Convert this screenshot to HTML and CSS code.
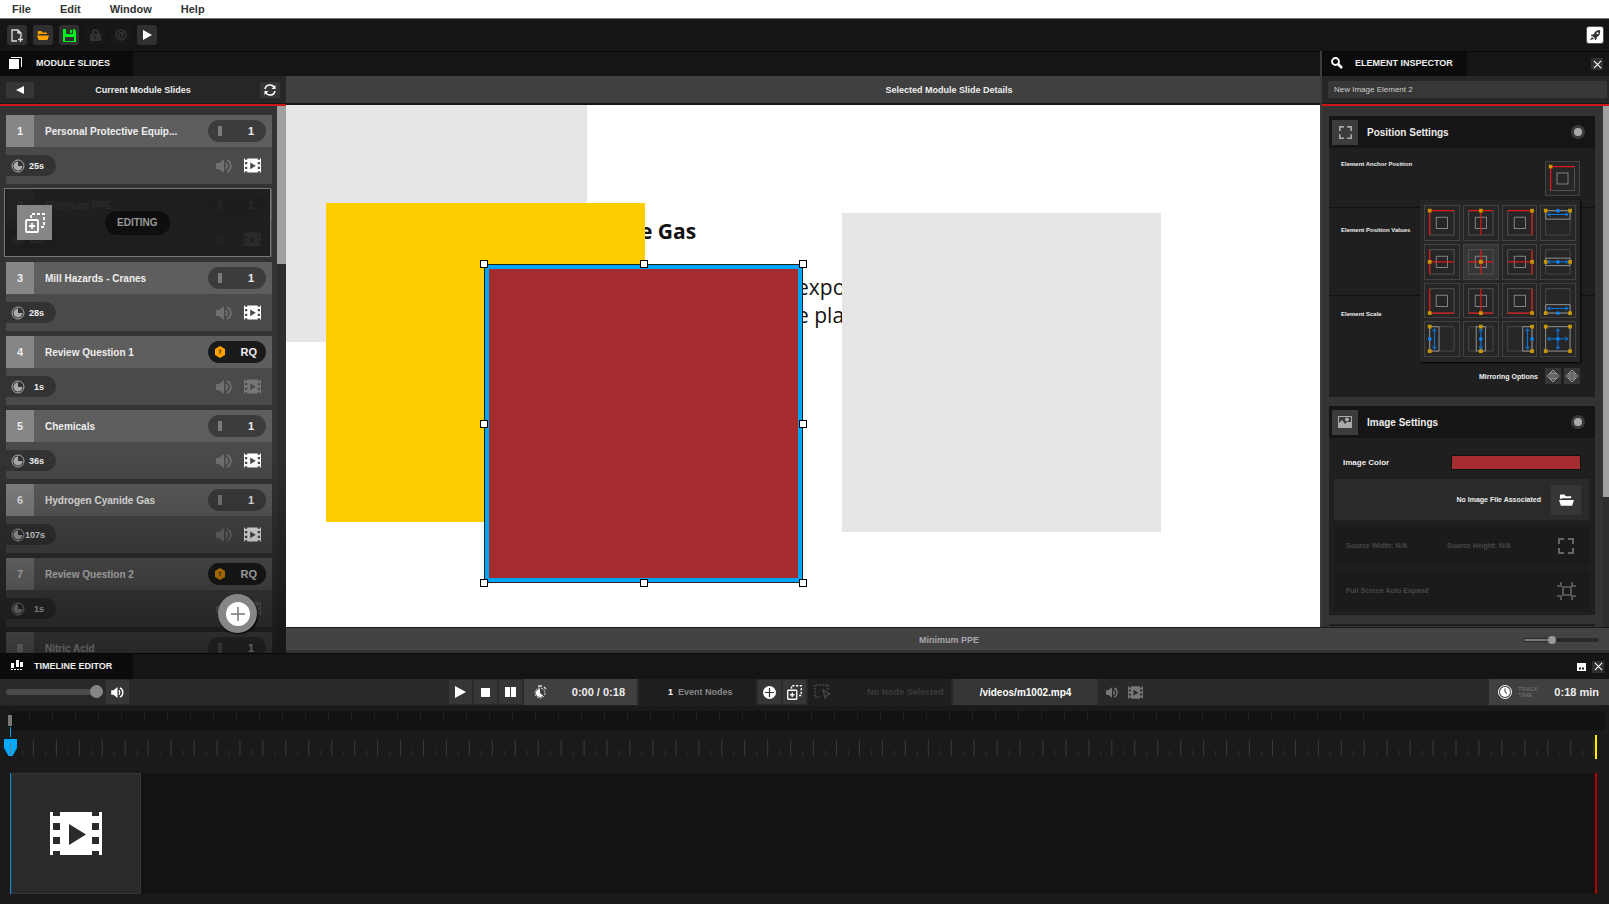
FILE: index.html
```html
<!DOCTYPE html>
<html lang="en">
<head>
    <meta charset="utf-8">
    <title>Module Editor</title>
    <meta name="viewport" content="width=device-width, initial-scale=1.0">
    <link rel="stylesheet" href="styles.css">
</head>
<body>
    <!-- Shared icons -->
    <svg class="sprite" aria-hidden="true">
        <symbol id="film" viewBox="0 0 52 43">
            <path fill="currentColor" fill-rule="evenodd" d="M0 0h3v4h7V0h32v4h7V0h3v43h-3v-4h-7v4H10v-4H3v4H0zM3 11v7h7v-7zM3 25v7h7v-7zM42 11v7h7v-7zM42 25v7h7v-7zM19 12v21l17-10.500z"/>
        </symbol>
        <symbol id="speaker" viewBox="0 1 16 14">
            <path fill="currentColor" d="M0 5h3l5-4v14l-5-4H0z"/>
            <path fill="none" stroke="currentColor" stroke-width="1.800" d="M10 5q2 3 0 6M11 2c5 2 5 10 0 12"/>
        </symbol>
        <symbol id="clock" viewBox="0 0 14 14">
            <circle cx="7" cy="7" r="6" fill="none" stroke="currentColor"/>
            <path fill="currentColor" d="M7 2.500A4.500 4.500 0 1 0 11.500 7H7z"/>
        </symbol>
        <symbol id="bar" viewBox="0 0 10 12">
            <path fill="#7a7a7a" d="M3 1h4v10H3z"/>
        </symbol>
        <symbol id="hex" viewBox="0 0 10 12">
            <path fill="#ffa200" d="M5 0l5 3v6l-5 3-5-3V3z"/>
            <path fill="none" stroke="#4a3000" d="M4 5q0-1 1-1t1 1l-1 1v2"/>
        </symbol>
        <symbol id="duplicate" viewBox="0 0 20 20">
            <rect x="1" y="7" width="12" height="12" rx="1" fill="none" stroke="currentColor" stroke-width="1.800"/>
            <path fill="none" stroke="currentColor" stroke-width="1.800" d="M7 10v6M4 13h6"/>
            <path fill="none" stroke="currentColor" stroke-width="1.800" stroke-dasharray="3 2" d="M6 5V1h13v13h-4"/>
        </symbol>
        <symbol id="expand" viewBox="0 0 16 16">
            <path fill="none" stroke="currentColor" stroke-width="2" d="M1 6V1h5M10 1h5v5M15 10v5h-5M6 15H1v-5"/>
        </symbol>
        <symbol id="folder" viewBox="0 0 16 12">
            <path fill="currentColor" d="M1 5V1q0-1 1-1h4l1 2h6v2H4zM0 6h16l-2 6H2z"/>
        </symbol>
        <symbol id="cross" viewBox="0 0 10 10">
            <path fill="none" stroke="currentColor" stroke-width="1.200" d="M1 1l8 8M9 1l-8 8"/>
        </symbol>
        <symbol id="frame" viewBox="0 0 36 36">
            <rect x="5" y="5" width="26" height="26" fill="none" stroke="#555"/>
            <rect x="12" y="12" width="12" height="12" fill="none" stroke="#888"/>
        </symbol>
        <symbol id="anchor-tl" viewBox="0 0 36 36">
            <use href="#frame"/>
            <path fill="none" stroke="#e01818" stroke-width="1.300" d="M5 31V5h26"/>
            <path fill="#c89600" d="M3 3h4v4H3z"/>
        </symbol>
    </svg>

    <nav class="menu">
        <button>File</button>
        <button>Edit</button>
        <button>Window</button>
        <button>Help</button>
    </nav>

    <header class="toolbar">
        <button class="tool" aria-label="New">
            <svg width="12" height="13" viewBox="0 0 12 13"><path fill="none" stroke="#ddd" stroke-width="1.300" d="M6 12H1V1h6l3 3v4M7 1v3h3M7 10.500h5M9.500 8v5"/></svg>
        </button>
        <button class="tool open" aria-label="Open"><svg width="12" height="9"><use href="#folder"/></svg></button>
        <button class="tool" aria-label="Save">
            <svg width="13" height="13" viewBox="0 0 13 13"><path fill="#00f51d" fill-rule="evenodd" d="M0 0h11l2 2v11H0zM3 0v5h7V0zM2 8v4h9V8z"/><path fill="#00f51d" d="M7 1h2v3H7z"/></svg>
        </button>
        <button class="tool off" aria-label="Lock" disabled>
            <svg width="11" height="12" viewBox="0 0 11 12"><path fill="#333" d="M0 5h11v7H0z"/><path fill="none" stroke="#333" stroke-width="2" d="M3 5V3q0-2 2.500-2T8 3v2"/><path fill="#181818" d="M5 7h1v3H5z"/></svg>
        </button>
        <button class="tool off" aria-label="Reload" disabled>
            <svg width="12" height="12" viewBox="0 0 12 12"><circle cx="6" cy="6" r="5" fill="none" stroke="#333" stroke-width="1.500"/><path fill="none" stroke="#333" stroke-width="1.500" d="M8 4.500A2.500 2.500 0 1 0 8 8M8 3v3H6"/></svg>
        </button>
        <button class="tool" aria-label="Preview">
            <svg width="9" height="10" viewBox="0 0 9 10"><path fill="#fff" d="M0 0l9 5-9 5z"/></svg>
        </button>
        <button class="tool launch" aria-label="Publish">
            <svg width="11" height="11" viewBox="0 0 11 11"><path fill="#333" d="M10 0Q5 0 4 4L1 5v1l2 .500L4.500 8 5 10h1l1-3q4-2 3-7zM0 10l2-3 2 2z"/><circle cx="7.500" cy="3.300" r="1" fill="#fff"/></svg>
        </button>
    </header>

    <main class="workspace">
        <aside class="slides">
            <div class="tabs">
                <h2 class="tab">
                    <svg width="13" height="12" viewBox="0 0 13 12"><path fill="#fff" d="M0 2h10v10H0z"/><path fill="none" stroke="#fff" d="M2 .500h10.500V10"/></svg>
                    MODULE SLIDES
                </h2>
            </div>
            <div class="panel-head">
                <button class="small-btn" aria-label="Back"><svg width="8" height="8" viewBox="0 0 8 8"><path fill="#fff" d="M8 0v8L0 4z"/></svg></button>
                <span>Current Module Slides</span>
                <button class="small-btn refresh" aria-label="Refresh">
                    <svg width="12" height="12" viewBox="0 0 12 12"><path fill="none" stroke="#fff" stroke-width="1.500" d="M1 5a5 5 0 0 1 9.500-1M11 7a5 5 0 0 1-9.500 1"/><path fill="#fff" d="M11.500 1v4h-4zM.500 11V7h4z"/></svg>
                </button>
            </div>
            <div class="slide-scroll">
                <div class="slide-list">
                    <article class="card">
                        <div class="card-head"><b class="num">1</b><span class="name">Personal Protective Equip...</span><span class="count"><svg width="10" height="12"><use href="#bar"/></svg>1</span></div>
                        <div class="card-body"><span class="time"><svg width="14" height="14"><use href="#clock"/></svg>25s</span><svg class="snd" width="16" height="14"><use href="#speaker"/></svg><svg class="vid on" width="17" height="15"><use href="#film"/></svg></div>
                    </article>
                    <article class="card editing">
                        <div class="card-head"><b class="num">2</b><span class="name">Minimum PPE</span><span class="count"><svg width="10" height="12"><use href="#bar"/></svg>1</span></div>
                        <div class="card-body"><span class="time"><svg width="14" height="14"><use href="#clock"/></svg>18s</span><svg class="snd" width="16" height="14"><use href="#speaker"/></svg><svg class="vid on" width="17" height="15"><use href="#film"/></svg></div>
                        <div class="edit-cover">
                            <button class="dup" aria-label="Duplicate slide"><svg width="20" height="20"><use href="#duplicate"/></svg></button>
                            <span class="edit-label">EDITING</span>
                        </div>
                    </article>
                    <article class="card">
                        <div class="card-head"><b class="num">3</b><span class="name">Mill Hazards - Cranes</span><span class="count"><svg width="10" height="12"><use href="#bar"/></svg>1</span></div>
                        <div class="card-body"><span class="time"><svg width="14" height="14"><use href="#clock"/></svg>28s</span><svg class="snd" width="16" height="14"><use href="#speaker"/></svg><svg class="vid on" width="17" height="15"><use href="#film"/></svg></div>
                    </article>
                    <article class="card">
                        <div class="card-head"><b class="num">4</b><span class="name">Review Question 1</span><span class="count rq"><svg width="10" height="12"><use href="#hex"/></svg>RQ</span></div>
                        <div class="card-body"><span class="time"><svg width="14" height="14"><use href="#clock"/></svg>1s</span><svg class="snd" width="16" height="14"><use href="#speaker"/></svg><svg class="vid" width="17" height="15"><use href="#film"/></svg></div>
                    </article>
                    <article class="card">
                        <div class="card-head"><b class="num">5</b><span class="name">Chemicals</span><span class="count"><svg width="10" height="12"><use href="#bar"/></svg>1</span></div>
                        <div class="card-body"><span class="time"><svg width="14" height="14"><use href="#clock"/></svg>36s</span><svg class="snd" width="16" height="14"><use href="#speaker"/></svg><svg class="vid on" width="17" height="15"><use href="#film"/></svg></div>
                    </article>
                    <article class="card">
                        <div class="card-head"><b class="num">6</b><span class="name">Hydrogen Cyanide Gas</span><span class="count"><svg width="10" height="12"><use href="#bar"/></svg>1</span></div>
                        <div class="card-body"><span class="time"><svg width="14" height="14"><use href="#clock"/></svg>107s</span><svg class="snd" width="16" height="14"><use href="#speaker"/></svg><svg class="vid on" width="17" height="15"><use href="#film"/></svg></div>
                    </article>
                    <article class="card">
                        <div class="card-head"><b class="num">7</b><span class="name">Review Question 2</span><span class="count rq"><svg width="10" height="12"><use href="#hex"/></svg>RQ</span></div>
                        <div class="card-body"><span class="time"><svg width="14" height="14"><use href="#clock"/></svg>1s</span><svg class="snd" width="16" height="14"><use href="#speaker"/></svg><svg class="vid" width="17" height="15"><use href="#film"/></svg></div>
                    </article>
                    <article class="card">
                        <div class="card-head"><b class="num">8</b><span class="name">Nitric Acid</span><span class="count"><svg width="10" height="12"><use href="#bar"/></svg>1</span></div>
                    </article>
                </div>
                <div class="scrollbar"><div class="thumb"></div></div>
                <button class="add-slide" aria-label="Add slide"><svg width="24" height="24" viewBox="0 0 24 24"><circle cx="12" cy="12" r="12" fill="#fff"/><path stroke="#777" stroke-width="1.500" d="M12 5v14M5 12h14"/></svg></button>
            </div>
        </aside>

        <section class="stage">
            <div class="tabs"></div>
            <div class="stage-head">Selected Module Slide Details</div>
            <div class="canvas">
                <div class="shape grey-a"></div>
                <p class="slide-title">e Gas</p>
                <p class="slide-text">expo<br>e pla</p>
                <div class="shape grey-b"></div>
                <div class="shape yellow"></div>
                <div class="shape red">
                    <i class="handle nw"></i><i class="handle n"></i><i class="handle ne"></i>
                    <i class="handle w"></i><i class="handle e"></i>
                    <i class="handle sw"></i><i class="handle s"></i><i class="handle se"></i>
                </div>
            </div>
        </section>

        <aside class="inspector">
            <div class="tabs">
                <h2 class="tab">
                    <svg width="12" height="12" viewBox="0 0 12 12"><circle cx="4.500" cy="4.500" r="3.500" fill="none" stroke="#fff" stroke-width="1.800"/><path stroke="#fff" stroke-width="2.500" d="M7 7l4 4"/></svg>
                    ELEMENT INSPECTOR
                </h2>
                <button class="close" aria-label="Close inspector"><svg width="9" height="9"><use href="#cross"/></svg></button>
            </div>
            <div class="panel-head">
                <input class="element-name" type="text" value="New Image Element 2" aria-label="Element name">
            </div>
            <div class="inspector-scroll">
                <div class="groups">
                    <section class="group">
                        <h3 class="group-head"><span class="group-icon"><svg width="13" height="13"><use href="#expand"/></svg></span>Position Settings<i class="dot"></i></h3>
                        <div class="row anchor-row">
                            <span>Element Anchor Position</span>
                            <button class="anchor current" aria-label="Anchor top left"><svg><use href="#anchor-tl"/></svg></button>
                            <div class="anchor-menu">
                                <button class="anchor" aria-label="Top left"><svg viewBox="0 0 36 36"><use href="#anchor-tl"/></svg></button>
                                <button class="anchor" aria-label="Top center"><svg viewBox="0 0 36 36"><use href="#frame"/><path class="r" d="M5 5h26M18 5v26"/><path class="y" d="M16 3h4v4h-4z"/></svg></button>
                                <button class="anchor" aria-label="Top right"><svg viewBox="0 0 36 36"><use href="#frame"/><path class="r" d="M5 5h26v26"/><path class="y" d="M29 3h4v4h-4z"/></svg></button>
                                <button class="anchor" aria-label="Stretch top"><svg viewBox="0 0 36 36"><path class="o" d="M5 5h26v26H5z"/><path class="g" d="M5 5h26v9H5z"/><path class="b" d="M8 9h20M10 7L7 9l3 2M26 7l3 2-3 2"/><path class="y" d="M3 3h4v4H3zM29 3h4v4h-4z"/><circle class="d" cx="18" cy="5" r="2"/></svg></button>

                                <button class="anchor" aria-label="Middle left"><svg viewBox="0 0 36 36"><use href="#frame"/><path class="r" d="M5 5v26M5 18h26"/><path class="y" d="M3 16h4v4H3z"/></svg></button>
                                <button class="anchor hover" aria-label="Middle center"><svg viewBox="0 0 36 36"><use href="#frame"/><path class="r" d="M5 18h26M18 5v26"/><path class="y" d="M16 16h4v4h-4z"/></svg></button>
                                <button class="anchor" aria-label="Middle right"><svg viewBox="0 0 36 36"><use href="#frame"/><path class="r" d="M31 5v26M5 18h26"/><path class="y" d="M29 16h4v4h-4z"/></svg></button>
                                <button class="anchor" aria-label="Stretch middle"><svg viewBox="0 0 36 36"><path class="o" d="M5 5h26v26H5z"/><path class="g" d="M5 14h26v8H5z"/><path class="b" d="M8 18h20M10 16l-3 2 3 2M26 16l3 2-3 2"/><path class="y" d="M3 16h4v4H3zM29 16h4v4h-4z"/><circle class="d" cx="18" cy="18" r="2"/></svg></button>

                                <button class="anchor" aria-label="Bottom left"><svg viewBox="0 0 36 36"><use href="#frame"/><path class="r" d="M5 5v26h26"/><path class="y" d="M3 29h4v4H3z"/></svg></button>
                                <button class="anchor" aria-label="Bottom center"><svg viewBox="0 0 36 36"><use href="#frame"/><path class="r" d="M5 31h26M18 5v26"/><path class="y" d="M16 29h4v4h-4z"/></svg></button>
                                <button class="anchor" aria-label="Bottom right"><svg viewBox="0 0 36 36"><use href="#frame"/><path class="r" d="M31 5v26H5"/><path class="y" d="M29 29h4v4h-4z"/></svg></button>
                                <button class="anchor" aria-label="Stretch bottom"><svg viewBox="0 0 36 36"><path class="o" d="M5 5h26v26H5z"/><path class="g" d="M5 22h26v9H5z"/><path class="b" d="M8 26h20M10 24l-3 2 3 2M26 24l3 2-3 2"/><path class="y" d="M3 29h4v4H3zM29 29h4v4h-4z"/><circle class="d" cx="18" cy="31" r="2"/></svg></button>

                                <button class="anchor" aria-label="Stretch left"><svg viewBox="0 0 36 36"><path class="o" d="M5 5h26v26H5z"/><path class="g" d="M5 5h10v26H5z"/><path class="b" d="M10 8v20M8 10l2-3 2 3M8 26l2 3 2-3"/><path class="y" d="M3 3h4v4H3zM3 29h4v4H3z"/><circle class="d" cx="5" cy="18" r="2"/></svg></button>
                                <button class="anchor" aria-label="Stretch center"><svg viewBox="0 0 36 36"><path class="o" d="M5 5h26v26H5z"/><path class="g" d="M13 5h10v26H13z"/><path class="b" d="M18 8v20M16 10l2-3 2 3M16 26l2 3 2-3"/><path class="y" d="M16 3h4v4h-4zM16 29h4v4h-4z"/><circle class="d" cx="18" cy="18" r="2"/></svg></button>
                                <button class="anchor" aria-label="Stretch right"><svg viewBox="0 0 36 36"><path class="o" d="M5 5h26v26H5z"/><path class="g" d="M21 5h10v26H21z"/><path class="b" d="M26 8v20M24 10l2-3 2 3M24 26l2 3 2-3"/><path class="y" d="M29 3h4v4h-4zM29 29h4v4h-4z"/><circle class="d" cx="31" cy="18" r="2"/></svg></button>
                                <button class="anchor" aria-label="Stretch all"><svg viewBox="0 0 36 36"><path class="g" d="M5 5h26v26H5z"/><path class="b" d="M8 18h20M18 8v20M10 16l-3 2 3 2M26 16l3 2-3 2M16 10l2-3 2 3M16 26l2 3 2-3"/><path class="y" d="M3 3h4v4H3zM29 3h4v4h-4zM3 29h4v4H3zM29 29h4v4h-4z"/><circle class="d" cx="18" cy="18" r="2"/></svg></button>
                            </div>
                        </div>
                        <div class="row values-row"><span>Element Position Values</span></div>
                        <div class="row scale-row">
                            <span>Element Scale</span>
                            <div class="mirror">
                                <span>Mirroring Options</span>
                                <button aria-label="Mirror horizontally"><svg width="12" height="12" viewBox="0 0 12 12"><path d="M6 0l3 3H3zM6 12l3-3H3zM0 6l3-3v6zM12 6L9 3v6zM5 3v6M7 3v6"/></svg></button>
                                <button aria-label="Mirror vertically"><svg width="12" height="12" viewBox="0 0 12 12"><path d="M6 0l3 3H3zM6 12l3-3H3zM0 6l3-3v6zM12 6L9 3v6zM3 5h6M3 7h6"/></svg></button>
                            </div>
                        </div>
                    </section>

                    <section class="group">
                        <h3 class="group-head"><span class="group-icon"><svg width="14" height="12" viewBox="0 0 14 12"><path fill="#aaa" fill-rule="evenodd" d="M0 0h14v12H0zM1 1v6l3-3 3 4 2-2h4V1z"/><circle cx="9" cy="3.500" r="2" fill="#aaa"/></svg></span>Image Settings<i class="dot"></i></h3>
                        <div class="color-row">
                            <label for="image-color">Image Color</label>
                            <input type="color" id="image-color" value="#a52d30">
                        </div>
                        <div class="box file-box">
                            <span>No Image File Associated</span>
                            <button aria-label="Browse image"><svg width="15" height="12"><use href="#folder"/></svg></button>
                        </div>
                        <div class="box dim">
                            <span class="half">Source Width: N/A</span>
                            <span class="half">Source Height: N/A</span>
                            <button aria-label="Use source size" disabled><svg width="16" height="16"><use href="#expand"/></svg></button>
                        </div>
                        <div class="box dim">
                            <span>Full Screen Auto Expand</span>
                            <button aria-label="Full screen" disabled><svg width="19" height="18" viewBox="0 0 19 18"><path fill="none" stroke="currentColor" stroke-width="1.600" d="M6 5h8v8H6zM0 4h4V0M15 0v4h4M19 14h-4v4M4 18v-4H0"/></svg></button>
                        </div>
                    </section>
                    <section class="group"></section>
                </div>
                <div class="scrollbar"><div class="thumb"></div></div>
            </div>
        </aside>

        <footer class="stage-foot">
            <span>Minimum PPE</span>
            <input class="zoom" type="range" min="0" max="100" value="37" aria-label="Zoom">
        </footer>
    </main>

    <section class="timeline">
        <div class="tabs">
            <h2 class="tab">
                <svg width="12" height="11" viewBox="0 0 12 11"><path fill="#fff" d="M0 3h3v5H0zM5 0h3v7H5zM9 2h3v5H9z"/><path stroke="#fff" stroke-dasharray="2 1" d="M0 9.500h12"/></svg>
                TIMELINE EDITOR
            </h2>
            <button class="dock" aria-label="Dock timeline"><svg width="9" height="8" viewBox="0 0 9 8"><path fill="#fff" d="M0 0h9v8H0z"/><path stroke="#222" d="M2 5.500h2M5 5.500h2M3 4v3M6 4v3"/></svg></button>
            <button class="close" aria-label="Close timeline"><svg width="9" height="9"><use href="#cross"/></svg></button>
        </div>

        <div class="controls">
            <div class="volume">
                <input type="range" min="0" max="100" value="100" aria-label="Volume">
                <button class="ctl" aria-label="Mute"><svg width="13" height="11"><use href="#speaker"/></svg></button>
            </div>
            <button class="ctl" aria-label="Play"><svg width="11" height="12" viewBox="0 0 11 12"><path fill="#fff" d="M0 0l11 6-11 6z"/></svg></button>
            <button class="ctl" aria-label="Stop"><svg width="9" height="9"><path fill="#fff" d="M0 0h9v9H0z"/></svg></button>
            <button class="ctl" aria-label="Pause"><svg width="11" height="10"><path fill="#fff" d="M0 0h5v10H0zM6 0h5v10H6z"/></svg></button>
            <div class="clock-box">
                <svg width="13" height="14" viewBox="0 0 13 14"><circle cx="6" cy="8" r="5" fill="none" stroke="#ddd" stroke-dasharray="2 1"/><path fill="#fff" d="M6 4a4 4 0 1 0 3 6.500L6 8z"/><path stroke="#ddd" stroke-width="1.500" d="M4 1h4M10 2l2 2"/></svg>
                <span>0:00 / 0:18</span>
            </div>
            <div class="nodes"><b>1</b> Event Nodes</div>
            <button class="ctl" aria-label="Add node"><svg width="13" height="13" viewBox="0 0 13 13"><circle cx="6.500" cy="6.500" r="6.500" fill="#fff"/><path stroke="#333" stroke-width="1.200" d="M6.500 2v9M2 6.500h9"/></svg></button>
            <button class="ctl" aria-label="Duplicate node"><svg width="15" height="15"><use href="#duplicate"/></svg></button>
            <div class="no-node">
                <svg width="17" height="16" viewBox="0 0 17 16"><path fill="none" stroke="#444" stroke-width="1.500" stroke-dasharray="2 1" d="M14 6V1H1v12h6"/><path fill="none" stroke="#444" stroke-width="1.500" d="M9 6l7 4-3 1-2 3z"/></svg>
                <span>No Node Selected</span>
            </div>
            <div class="video-name">/videos/m1002.mp4</div>
            <button class="ctl faint" aria-label="Clip sound"><svg width="12" height="11"><use href="#speaker"/></svg></button>
            <button class="ctl faint" aria-label="Clip video"><svg width="15" height="13"><use href="#film"/></svg></button>
            <div class="track-time">
                <svg width="14" height="14" viewBox="0 0 14 14"><circle cx="7" cy="7" r="6.500" fill="none" stroke="#fff"/><circle cx="7" cy="7" r="5" fill="#fff"/><path fill="none" stroke="#333" d="M7 3.500V7l2 1.500"/></svg>
                <small>TRACK<br>TIME</small>
                <span>0:18 min</span>
            </div>
        </div>

        <div class="overview">
            <svg class="ticks" width="100%" height="9"><defs><pattern id="small-ticks" width="23" height="9" patternUnits="userSpaceOnUse"><path fill="#1f1f1f" d="M19 0h1v9h-1z"/><path fill="#181818" d="M8 2h1v2H8z"/></pattern></defs><rect width="1376" height="9" fill="url(#small-ticks)"/></svg>
            <i class="marker"></i>
        </div>
        <div class="ruler">
            <svg width="100%" height="18"><defs><pattern id="big-ticks" x="1" width="22.945" height="18" patternUnits="userSpaceOnUse"><path fill="#3a3a3a" d="M21.900 1h1v16h-1z"/><path fill="#2b2b2b" d="M11 11h1v6h-1z"/></pattern></defs><rect width="100%" height="18" fill="url(#big-ticks)"/></svg>
            <svg class="playhead" width="13" height="29" viewBox="0 0 13 29"><path fill="#0af" d="M6 0h1v10H6zM0 12h13v9l-4.500 8h-4L0 21z"/><path fill="#777" d="M6 16h1v12H6z"/></svg>
            <i class="end"></i>
        </div>
        <div class="track">
            <div class="clip"><svg width="52" height="43"><use href="#film"/></svg></div>
        </div>
    </section>
</body>
</html>
```

FILE: styles.css
```css
* {
    box-sizing: border-box;
}

body {
    margin: 0;
    height: 100vh;
    display: flex;
    flex-direction: column;
    overflow: hidden;
    background-color: #1a1a1a;
    color: #eee;
    font-family: 'Liberation Sans', Arial, sans-serif;
    font-size: 10px;
    font-weight: bold;
}

button {
    display: flex;
    align-items: center;
    justify-content: center;
    flex: none;
    padding: 0;
    border: none;
    background-color: #363636;
    color: #fff;
    font: inherit;
}

h2, h3, p {
    margin: 0;
    font-size: inherit;
}

.sprite {
    position: absolute;
    width: 0;
    height: 0;
}

/* Menu and toolbar */
.menu {
    display: flex;
    gap: 29px;
    height: 19px;
    padding-left: 12px;
    background-color: #fff;
    border-bottom: 1px solid #777;
}

.menu button {
    background: none;
    color: #333;
    font-size: 11px;
}

.toolbar {
    display: flex;
    align-items: center;
    gap: 6px;
    height: 32px;
    padding: 0 5px 0 7px;
    background-color: #151515;
}

.tool {
    width: 20px;
    height: 20px;
    background-color: #303030;
    border-radius: 3px;
}

.tool.open {
    color: #ffa200;
}

.tool.off {
    background-color: #181818;
}

.tool.launch {
    width: 18px;
    height: 18px;
    margin-left: auto;
    background-color: #fff;
    border: 1px solid #555;
}

/* Tabs */
.tabs {
    display: flex;
    align-items: center;
    height: 25px;
    background-color: #151515;
    border-top: 1px solid #080808;
}

.tab {
    display: flex;
    align-items: center;
    gap: 14px;
    width: 133px;
    height: 100%;
    padding: 0 0 2px 9px;
    background-color: #0b0b0b;
    font-size: 9px;
}

.close {
    width: 12px;
    height: 12px;
    margin-left: auto;
    background-color: #303030;
}

.panel-head {
    display: flex;
    align-items: center;
    height: 28px;
    padding: 0 6px;
    background-color: #262626;
    font-size: 9px;
    border-bottom: 1px solid #1a1a1a;
}

.panel-head span {
    flex: 1;
    padding-right: 8px;
    text-align: center;
}

.small-btn {
    width: 28px;
    height: 16px;
}

.small-btn.refresh {
    width: 20px;
}

.scrollbar {
    width: 9px;
    background-color: #2e2e2e;
}

.thumb {
    background-color: #a0a0a0;
}

/* Workspace */
.workspace {
    flex: 1;
    min-height: 0;
    display: grid;
    grid-template-columns: 286px 1fr 289px;
    grid-template-rows: minmax(0, 1fr) 26px;
}

.slides {
    grid-row: 1 / 3;
    display: flex;
    flex-direction: column;
    min-height: 0;
}

.slide-scroll {
    position: relative;
    flex: 1;
    display: flex;
    min-height: 0;
    overflow: hidden;
    background-color: #333;
    border-top: 2px solid #d01717;
}

.slide-scroll::after {
    content: "";
    position: absolute;
    inset: 64% 0 0 0;
    background-image: linear-gradient(rgba(10, 10, 10, 0), rgba(10, 10, 10, 0.65));
    pointer-events: none;
}

.slide-list {
    flex: 1;
    display: flex;
    flex-direction: column;
    gap: 5px;
    padding: 9px 5px 0 6px;
}

.slides .thumb {
    height: 158px;
}

.card {
    position: relative;
    flex: none;
    height: 69px;
    background-color: #4a4a4a;
}

.card.editing {
    height: 68px;
}

.card-head {
    display: flex;
    align-items: center;
    height: 32px;
    padding-right: 6px;
    background-color: #5e5e5e;
}

.num {
    width: 28px;
    line-height: 32px;
    margin-right: 11px;
    background-color: #868686;
    font-size: 11px;
    text-align: center;
}

.count {
    display: flex;
    align-items: center;
    justify-content: space-between;
    width: 58px;
    height: 22px;
    margin-left: auto;
    padding: 0 12px 0 7px;
    border-radius: 11px;
    background-color: #3c3c3c;
    font-size: 11px;
}

.count.rq {
    padding-right: 9px;
    background-color: #1a1a1a;
}

.card-body {
    display: flex;
    align-items: center;
    height: 37px;
    padding-right: 11px;
}

.time {
    display: flex;
    align-items: center;
    justify-content: space-between;
    width: 50px;
    height: 21px;
    padding: 0 12px 0 5px;
    border-radius: 0 11px 11px 0;
    background-color: #333;
    font-size: 9px;
}

.time svg {
    flex: none;
    color: #aaa;
}

.snd {
    margin: 0 12px 0 auto;
    color: #707070;
}

.vid {
    color: #777;
}

.vid.on {
    color: #fff;
}

/* Cover on the slide that is open in the editor */
.edit-cover {
    position: absolute;
    inset: -1px 1px 0 -2px;
    display: flex;
    align-items: center;
    padding-left: 12px;
    background-color: rgba(27, 27, 27, 0.93);
    border: 1px solid #777;
}

.dup {
    width: 35px;
    height: 35px;
    background-color: #868686;
}

.edit-label {
    margin-left: 53px;
    padding: 0 12px;
    border-radius: 12px;
    background-color: #0e0e0e;
    color: #999;
    line-height: 24px;
}

.add-slide {
    position: absolute;
    right: 29px;
    bottom: 20px;
    z-index: 1;
    width: 39px;
    height: 39px;
    border-radius: 50%;
    background-color: #868686;
    box-shadow: 1px 1px 2px #000;
}

/* Stage */
.stage {
    display: flex;
    flex-direction: column;
    min-width: 0;
}

.stage-head {
    height: 29px;
    padding-left: 292px;
    background-color: #404040;
    border-bottom: 2px solid #151515;
    font-size: 9px;
    line-height: 28px;
    text-align: center;
}

.canvas {
    position: relative;
    flex: 1;
    overflow: hidden;
    background-color: #fff;
}

.shape {
    position: absolute;
    width: 319px;
    height: 319px;
}

.grey-a {
    left: 0;
    top: 0;
    width: 301px;
    height: 237px;
    background-color: #e6e6e6;
}

.grey-b {
    left: 556px;
    top: 108px;
    background-color: #e6e6e6;
}

.yellow {
    left: 40px;
    top: 98px;
    background-color: #fecd00;
}

.red {
    left: 198px;
    top: 159px;
    background-color: #a52d30;
    border: 1px solid #222;
    box-shadow: inset 0 0 0 4px #00a5f5;
}

.slide-title,
.slide-text {
    position: absolute;
    color: #111;
    font-family: 'Open Sans', 'Noto Sans', sans-serif;
    font-size: 21px;
    line-height: 28px;
}

.slide-title {
    left: 354px;
    top: 112px;
}

.slide-text {
    left: 511px;
    top: 168px;
    font-weight: normal;
}

.handle {
    position: absolute;
    width: 8px;
    height: 8px;
    background-color: #fff;
    border: 1px solid #000;
}

.nw, .n, .ne { top: -5px; }
.w, .e { top: 155px; }
.sw, .s, .se { bottom: -5px; }
.nw, .w, .sw { left: -5px; }
.n, .s { left: 155px; }
.ne, .e, .se { right: -5px; }

.stage-foot {
    grid-column: 2 / 4;
    display: flex;
    align-items: center;
    padding: 2px 10px 0 633px;
    background-color: #434343;
    border-top: 1px solid #1a1a1a;
    border-bottom: 3px solid #333;
    color: #aaa;
    font-size: 9px;
}

input[type="range"] {
    appearance: none;
    margin: 0;
    background: none;
}

input.zoom {
    width: 76px;
    height: 8px;
    margin-left: auto;
}

.zoom::-webkit-slider-runnable-track {
    height: 4px;
    border-radius: 2px;
    border: 1px solid #2a2a2a;
    background-image: linear-gradient(90deg, #777 37%, #2a2a2a 37%);
}

.zoom::-webkit-slider-thumb {
    appearance: none;
    width: 8px;
    height: 8px;
    margin-top: -3px;
    border-radius: 50%;
    background-color: #999;
}

/* Inspector */
.inspector {
    display: flex;
    flex-direction: column;
    min-height: 0;
    border-left: 2px solid #3c3c3c;
}

.inspector .tab {
    width: 145px;
    gap: 12px;
}

.inspector .close {
    margin-right: 6px;
}

.inspector .panel-head {
    padding-right: 2px;
}

.element-name {
    width: 100%;
    height: 17px;
    padding: 0 6px;
    border: none;
    background-color: #373737;
    color: #ccc;
    font-family: inherit;
    font-size: 8px;
}

.inspector-scroll {
    flex: 1;
    display: flex;
    min-height: 0;
    overflow: hidden;
    background-color: #333;
    border-top: 2px solid #d01717;
}

.groups {
    flex: 1;
    display: flex;
    flex-direction: column;
    gap: 9px;
    padding: 10px 8px 0 7px;
}

.inspector .scrollbar {
    width: 6px;
}

.inspector .thumb {
    height: 391px;
}

.group {
    flex: none;
    min-height: 2px;
    background-color: #1f1f1f;
    font-size: 7px;
}

.group-head {
    display: flex;
    align-items: center;
    height: 32px;
    padding: 0 10px 0 3px;
    background-color: #151515;
    font-size: 10px;
}

.group-icon {
    display: flex;
    align-items: center;
    justify-content: center;
    width: 26px;
    height: 25px;
    margin-right: 9px;
    background-color: #3c3c3c;
    color: #aaa;
}

.dot {
    width: 14px;
    height: 14px;
    margin-left: auto;
    border: 3px solid #3a3a3a;
    border-radius: 50%;
    background-color: #aaa;
}

.row {
    position: relative;
    display: flex;
    justify-content: space-between;
    padding: 13px 15px 0 12px;
    border-bottom: 1px solid #111;
    font-size: 6px;
}

.anchor-row {
    height: 60px;
}

.values-row {
    height: 88px;
    padding-top: 19px;
}

.scale-row {
    height: 101px;
    padding-top: 15px;
    border-bottom: none;
}

.anchor {
    min-width: 0;
    aspect-ratio: 1;
    background-color: #262626;
    border: 1px solid #424242;
}

.anchor svg {
    width: 100%;
    height: 100%;
}

.anchor.current {
    width: 35px;
    height: 35px;
}

.anchor.hover {
    background-color: #363636;
}

.anchor-menu {
    position: absolute;
    right: 15px;
    top: 52px;
    z-index: 2;
    display: grid;
    grid-template-columns: repeat(4, 1fr);
    gap: 3px;
    width: 160px;
    padding: 5px 4px;
    background-color: #262626;
    box-shadow: 1px 1px 2px #000;
}

.anchor path {
    fill: none;
}

.anchor .r { stroke: #e01818; stroke-width: 1.300; }
.anchor .o { stroke: #4a4a4a; }
.anchor .g { stroke: #999; }
.anchor .b { stroke: #0a84f5; }
.anchor .y { fill: #c89600; }
.anchor .d { fill: #0a84f5; }

.mirror {
    display: flex;
    align-self: flex-start;
    align-items: center;
    gap: 3px;
    margin-top: 57px;
    font-size: 7px;
}

.mirror span {
    margin-right: 4px;
}

.mirror button {
    width: 16px;
    height: 16px;
}

.mirror path {
    fill: none;
    stroke: #999;
}

.color-row {
    display: flex;
    align-items: center;
    justify-content: space-between;
    height: 41px;
    padding: 8px 14px 0;
    font-size: 8px;
}

.color-row input {
    width: 130px;
    height: 15px;
    padding: 0;
    border: 1px solid #111;
    background: none;
}

.color-row input::-webkit-color-swatch-wrapper {
    padding: 0;
}

.color-row input::-webkit-color-swatch {
    border: none;
    border-radius: 0;
}

.box {
    display: flex;
    align-items: center;
    height: 41px;
    margin: 0 6px 4px 5px;
    padding: 0 8px 0 12px;
    background-color: #1b1b1b;
}

.file-box {
    justify-content: flex-end;
    gap: 10px;
    background-color: #2a2a2a;
    margin-bottom: 5px;
}

.box button {
    width: 30px;
    height: 30px;
    margin-left: auto;
}

.file-box button {
    margin-left: 0;
}

.half {
    width: 101px;
}

.dim {
    color: #484848;
}

.dim button {
    background: none;
    color: #666;
}

/* Timeline */
.timeline {
    display: flex;
    flex-direction: column;
    height: 251px;
}

.timeline .tabs {
    height: 26px;
}

.timeline .tab {
    padding-left: 11px;
    gap: 11px;
}

.dock {
    margin-left: auto;
    background: none;
}

.timeline .close {
    margin: 0 5px 0 6px;
}

.controls {
    display: flex;
    align-items: center;
    gap: 2px;
    height: 27px;
    background-color: #292929;
    border-bottom: 1px solid #202020;
    font-size: 9px;
}

.ctl {
    width: 23px;
    height: 24px;
}

.ctl.faint {
    background: none;
    color: #777;
    margin-right: -1px;
}

.volume {
    display: flex;
    align-items: center;
    gap: 3px;
    width: 447px;
    padding-left: 6px;
}

.volume input {
    width: 97px;
    height: 14px;
}

.volume input::-webkit-slider-runnable-track {
    height: 6px;
    border-radius: 3px;
    background-color: #4a4a4a;
}

.volume input::-webkit-slider-thumb {
    appearance: none;
    width: 13px;
    height: 13px;
    margin-top: -4px;
    border-radius: 50%;
    background-color: #868686;
}

.clock-box,
.nodes,
.no-node,
.video-name,
.track-time {
    display: flex;
    align-items: center;
    height: 26px;
}

.clock-box {
    justify-content: space-between;
    width: 113px;
    padding: 0 12px 0 10px;
    background-color: #404040;
    font-size: 11px;
}

.nodes {
    gap: 5px;
    width: 117px;
    padding-left: 29px;
    background-color: #1e1e1e;
    color: #888;
}

.nodes b {
    color: #fff;
}

.no-node {
    gap: 36px;
    width: 143px;
    padding-left: 6px;
    background-color: #1e1e1e;
    color: #3c3c3c;
}

.video-name {
    justify-content: center;
    width: 145px;
    background-color: #353535;
    color: #fff;
    font-size: 10px;
}

.track-time {
    gap: 6px;
    width: 120px;
    margin-left: auto;
    padding: 0 10px 0 9px;
    background-color: #404040;
    font-size: 11px;
}

.track-time small {
    color: #777;
    font-size: 6px;
    line-height: 6px;
    font-weight: normal;
}

.track-time span {
    margin-left: auto;
}

.overview {
    position: relative;
    height: 19px;
    margin: 5px 4px 0 10px;
    border-radius: 4px;
    background-color: #121212;
}

.ticks {
    display: block;
}

.marker {
    position: absolute;
    left: -2px;
    top: 4px;
    width: 4px;
    height: 11px;
    background-color: #777;
}

.ruler {
    position: relative;
    height: 26px;
    margin: 9px 13px 0 10px;
}

.playhead {
    position: absolute;
    left: -6px;
    top: -12px;
}

.end {
    position: absolute;
    right: -1px;
    top: -4px;
    width: 2px;
    height: 24px;
    background-color: #ffee00;
}

.track {
    flex: 1;
    margin: 8px 12px 10px 10px;
    background-color: #131313;
    border-left: 1px solid #0a8bd8;
    border-right: 2px solid #b00000;
}

.clip {
    display: flex;
    align-items: center;
    justify-content: center;
    width: 130px;
    height: 100%;
    background-color: #2a2a2a;
    border: 1px solid #363636;
    color: #fff;
}
```
